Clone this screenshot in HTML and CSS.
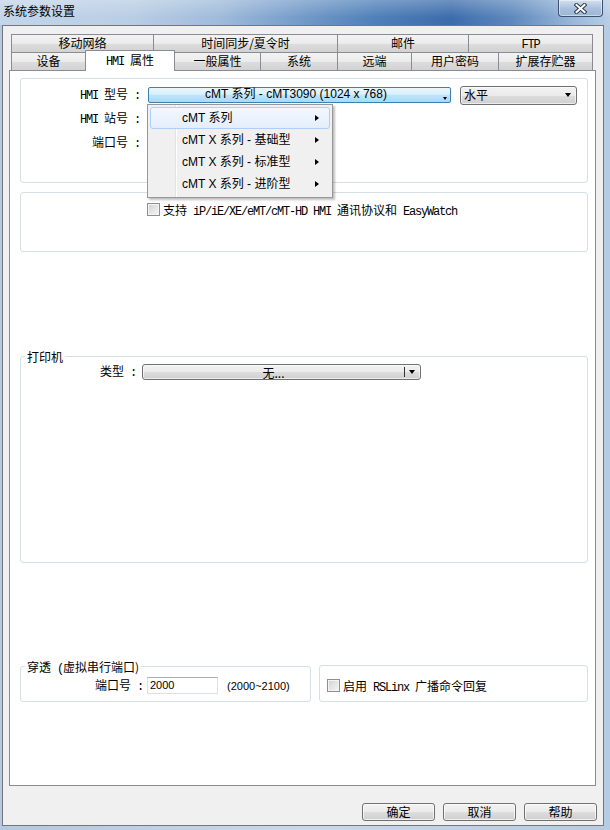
FILE: index.html
```html
<!DOCTYPE html>
<html lang="zh-CN">
<head>
<meta charset="utf-8">
<title>系统参数设置</title>
<link rel="stylesheet" href="styles.css">
</head>
<body>
<div class="window">
  <div class="titlebar">
    <span class="title">系统参数设置</span>
    <div class="close">
      <svg width="13" height="11" viewBox="0 0 13 11">
        <path d="M2.5 2 L10.5 9 M10.5 2 L2.5 9" stroke="#2b3a52" stroke-width="4" stroke-linecap="square"/>
        <path d="M2.5 2 L10.5 9 M10.5 2 L2.5 9" stroke="#ffffff" stroke-width="2" stroke-linecap="square"/>
      </svg>
    </div>
  </div>
  <div class="client">
    <div class="tabrow">
      <div class="tab t143">移动网络</div>
      <div class="tab t185">时间同步/夏令时</div>
      <div class="tab t132">邮件</div>
      <div class="tab t125"><span class="m">FTP</span></div>
    </div>
    <div class="tabrow">
      <div class="tab t75">设备</div>
      <div class="tab t90 active"><span class="m">HMI </span>属性</div>
      <div class="tab t87">一般属性</div>
      <div class="tab t78">系统</div>
      <div class="tab t75">远端</div>
      <div class="tab t88">用户密码</div>
      <div class="tab t95">扩展存贮器</div>
    </div>
    <div class="page">
      <div class="group g1">
        <div class="frow">
          <div class="lbl l119"><span class="m">HMI </span>型号<span class="m"> :</span></div>
          <div class="combo hot"><span class="ctext">cMT 系列 - cMT3090 (1024 x 768)</span><span class="tinyarrow"></span></div>
          <div class="combo plain orient"><span class="ctext left">水平</span><span class="darrow"></span></div>
        </div>
        <div class="frow">
          <div class="lbl l119"><span class="m">HMI </span>站号<span class="m"> :</span></div>
        </div>
        <div class="frow">
          <div class="lbl l119">端口号<span class="m"> :</span></div>
        </div>
        <div class="menu">
          <div class="mi sel"><span class="mt">cMT 系列</span><span class="sub"></span></div>
          <div class="mi"><span class="mt">cMT X 系列 - 基础型</span><span class="sub"></span></div>
          <div class="mi"><span class="mt">cMT X 系列 - 标准型</span><span class="sub"></span></div>
          <div class="mi"><span class="mt">cMT X 系列 - 进阶型</span><span class="sub"></span></div>
        </div>
      </div>
      <div class="group g2">
        <span class="chk"></span>
        <span class="ctxt">支持<span class="m"> iP/iE/XE/eMT/cMT-HD HMI </span>通讯协议和<span class="m"> EasyWatch</span></span>
      </div>
      <div class="group g3">
        <span class="legend">打印机</span>
        <div class="prow">
          <div class="lbl l115">类型<span class="m"> :</span></div>
          <div class="combo plain printer"><span class="ctext">无...</span><span class="sep"></span><span class="darrow"></span></div>
        </div>
      </div>
      <div class="bottomrow">
        <div class="group g4">
          <span class="legend">穿透<span class="m"> (</span>虚拟串行端口)</span>
          <div class="prow">
            <div class="lbl l122">端口号<span class="m"> :</span></div>
            <div class="input">2000</div>
            <span class="range">(2000~2100)</span>
          </div>
        </div>
        <div class="group g5">
          <span class="chk"></span>
          <span class="ctxt">启用<span class="m"> RSLinx </span>广播命令回复</span>
        </div>
      </div>
    </div>
    <div class="buttons">
      <div class="btn">确定</div>
      <div class="btn">取消</div>
      <div class="btn">帮助</div>
    </div>
  </div>
</div>
</body>
</html>
```

FILE: styles.css
```css
* { box-sizing: border-box; }
html, body { margin: 0; padding: 0; }
body {
  width: 610px;
  height: 830px;
  overflow: hidden;
  font-family: "Noto Sans CJK SC", sans-serif;
  font-size: 12px;
  line-height: 14px;
  color: #000;
}
.m {
  font-family: "Liberation Mono", "Noto Sans CJK SC", monospace;
  letter-spacing: -1.2px;
  white-space: pre;
}
.window {
  width: 610px;
  height: 830px;
  display: flex;
  flex-direction: column;
  background: linear-gradient(to right, #b3c9e2 0%, #c6d8ec 50%, #b5cce5 100%);
}
.titlebar {
  height: 25px;
  flex: none;
  display: flex;
  justify-content: space-between;
  align-items: flex-start;
  background:
    linear-gradient(to bottom, rgba(255,255,255,0.25), rgba(255,255,255,0) 70%),
    linear-gradient(to right, #c3d5e9 0%, #b9cde4 22%, #9fbbdb 36%, #7199c8 50%, #4e7fb8 62%, #3c6dab 74%, #5f89bd 84%, #9ab8da 94%, #b9cee5 100%);
}
.title {
  padding: 3px 0 0 3px;
  font-size: 12px;
  line-height: 15px;
  color: #000;
}
.close {
  width: 45px;
  height: 17px;
  margin-right: 7px;
  border: 1px solid #3d5273;
  border-top: none;
  border-radius: 0 0 4px 4px;
  background: linear-gradient(to bottom, #d4e0ee, #a9c0dc 55%, #9cb6d6);
  box-shadow: inset 0 0 0 1px rgba(255,255,255,0.45);
  display: flex;
  align-items: center;
  justify-content: center;
}
.client {
  flex: 1;
  margin: 0 6px 4px 2px;
  border: 1px solid #767676;
  background: #f0f0f0;
  padding: 8px 6px 0 6px;
  display: flex;
  flex-direction: column;
}
.tabrow {
  display: flex;
  align-items: flex-end;
  height: 18px;
  margin-left: 2px;
  flex: none;
}
.tab {
  height: 18px;
  margin-right: -1px;
  border: 1px solid #898c95;
  border-bottom: none;
  background: linear-gradient(to bottom, #f3f3f3 0%, #ebebeb 50%, #dddddd 51%, #d2d2d2 100%);
  text-align: center;
  line-height: 16px;
  white-space: nowrap;
}
.tab.active {
  height: 21px;
  margin-bottom: -1px;
  background: #ffffff;
  position: relative;
  z-index: 2;
  line-height: 17px;
}
.t143 { width: 143px; }
.t185 { width: 185px; }
.t132 { width: 132px; }
.t125 { width: 125px; }
.t75 { width: 75px; }
.t90 { width: 90px; }
.t87 { width: 87px; }
.t78 { width: 78px; }
.t88 { width: 88px; }
.t95 { width: 95px; }
.page {
  width: 587px;
  height: 716px;
  flex: none;
  border: 1px solid #898c95;
  background: #ffffff;
  padding: 7px 7px 0 10px;
  position: relative;
}
.group {
  border: 1px solid #d5dfe5;
  border-radius: 3px;
  position: relative;
}
.g1 {
  height: 105px;
  padding-top: 4px;
}
.frow {
  display: flex;
  align-items: center;
  height: 24px;
}
.lbl {
  text-align: right;
  white-space: nowrap;
  flex: none;
}
.l119 { width: 119px; margin-right: 8px; }
.l115 { width: 115px; margin-right: 6px; }
.l122 { width: 122px; margin-right: 4px; }
.combo {
  display: flex;
  align-items: center;
  flex: none;
  font-family: "Liberation Sans", "Noto Sans CJK SC", sans-serif;
}
.ctext {
  flex: 1;
  text-align: center;
  white-space: nowrap;
}
.ctext.left {
  text-align: left;
  padding-left: 3px;
  font-family: "Noto Sans CJK SC", sans-serif;
}
.combo.hot {
  width: 303px;
  height: 16px;
  border: 1px solid #3c7fb1;
  border-radius: 2px;
  background: linear-gradient(to bottom, #eaf6fd 0%, #d9f0fc 45%, #bee6fd 50%, #a7d9f5 100%);
  padding-right: 3px;
  align-items: stretch;
}
.combo.hot .ctext { line-height: 13px; }
.tinyarrow {
  align-self: flex-end;
  margin-bottom: 2px;
  width: 0;
  height: 0;
  border-left: 2.5px solid transparent;
  border-right: 2.5px solid transparent;
  border-top: 3px solid #000;
}
.combo.plain {
  border: 1px solid #707070;
  border-radius: 3px;
  background: linear-gradient(to bottom, #f2f2f2 0%, #ebebeb 50%, #dddddd 51%, #cfcfcf 100%);
  box-shadow: inset 0 0 0 1px rgba(255,255,255,0.6);
}
.orient {
  width: 117px;
  height: 19px;
  margin-left: 9px;
  padding-right: 5px;
}
.darrow {
  width: 0;
  height: 0;
  border-left: 3.5px solid transparent;
  border-right: 3.5px solid transparent;
  border-top: 4px solid #000;
  flex: none;
}
.menu {
  position: absolute;
  left: 126px;
  top: 25px;
  width: 186px;
  height: 94px;
  border: 1px solid #979797;
  background-color: #f0f0f0;
  background-image: linear-gradient(to right, transparent 27px, #e2e3e3 27px, #e2e3e3 28px, #ffffff 28px, #ffffff 29px, transparent 29px);
  padding: 2px;
  box-shadow: 2px 2px 2px rgba(0,0,0,0.25);
  z-index: 5;
  font-family: "Liberation Sans", "Noto Sans CJK SC", sans-serif;
}
.mi {
  height: 22px;
  display: flex;
  align-items: center;
  padding-left: 31px;
  padding-right: 10px;
  border: 1px solid transparent;
  border-radius: 3px;
}
.mi.sel {
  border-color: #aecff7;
  background: linear-gradient(to bottom, #f2f8fe, #e4eefb);
}
.mt { flex: 1; white-space: nowrap; }
.sub {
  width: 0;
  height: 0;
  border-top: 3.5px solid transparent;
  border-bottom: 3.5px solid transparent;
  border-left: 4px solid #000;
}
.g2 {
  margin-top: 9px;
  height: 60px;
  padding: 10px 0 0 126px;
  display: flex;
  align-items: flex-start;
}
.chk {
  width: 13px;
  height: 13px;
  flex: none;
  border: 1px solid #8e8f8f;
  background: linear-gradient(135deg, #cdd0d4 0%, #e4e4e4 50%, #f6f6f6 100%);
  box-shadow: inset 0 0 0 1px #f4f4f4;
}
.ctxt {
  margin-left: 3px;
  white-space: nowrap;
  line-height: 13px;
}
.legend {
  position: absolute;
  left: 4px;
  top: -7px;
  padding: 0 2px;
  background: #ffffff;
  line-height: 14px;
  white-space: nowrap;
}
.g3 {
  margin-top: 104px;
  height: 207px;
  padding-top: 7px;
}
.prow {
  display: flex;
  align-items: center;
}
.printer {
  width: 279px;
  height: 16px;
  padding-right: 5px;
}
.printer .ctext {
  line-height: 13px;
  font-family: "Noto Sans CJK SC", sans-serif;
}
.sep {
  width: 1px;
  height: 10px;
  background: #333;
  margin-right: 4px;
  flex: none;
}
.bottomrow {
  display: flex;
  gap: 8px;
  margin-top: 103px;
}
.g4 {
  width: 291px;
  height: 36px;
  padding-top: 10px;
}
.input {
  width: 71px;
  height: 17px;
  border: 1px solid #dbdfe6;
  border-top-color: #abadb3;
  background: #fff;
  padding-left: 2px;
  font-family: "Liberation Sans", sans-serif;
  font-size: 11px;
  line-height: 15px;
  flex: none;
}
.range {
  margin-left: 9px;
  font-family: "Liberation Sans", sans-serif;
  font-size: 11px;
  white-space: nowrap;
}
.g5 {
  width: 269px;
  height: 37px;
  margin-top: -1px;
  padding: 13px 0 0 7px;
  display: flex;
  align-items: flex-start;
}
.buttons {
  display: flex;
  justify-content: flex-end;
  gap: 8px;
  margin-top: 17px;
}
.btn {
  width: 73px;
  height: 18px;
  border: 1px solid #707070;
  border-radius: 3px;
  background: linear-gradient(to bottom, #f2f2f2 0%, #ebebeb 50%, #dddddd 51%, #cfcfcf 100%);
  box-shadow: inset 0 0 0 1px rgba(255,255,255,0.7);
  text-align: center;
  line-height: 15px;
}
```
